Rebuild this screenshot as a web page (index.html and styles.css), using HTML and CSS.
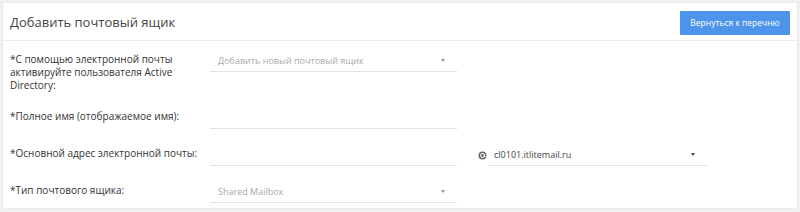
FILE: index.html
```html
<!DOCTYPE html>
<html lang="ru">
<head>
    <meta charset="UTF-8">
    <meta name="viewport" content="width=device-width, initial-scale=1.0">
    <title>Добавить почтовый ящик</title>
    <link rel="stylesheet" href="styles.css">
</head>
<body>

    <div class="card">
        <div class="card-header">
            <h1 class="title">Добавить почтовый ящик</h1>
            <button class="btn-back">Вернуться к перечню</button>
        </div>

        <form class="form">
            <div class="row">
                <label class="label label-wrap">*С помощью электронной почты активируйте пользователя Active Directory:</label>
                <div class="field select placeholder">Добавить новый почтовый ящик<span class="caret"></span></div>
            </div>

            <div class="row">
                <label class="label">*Полное имя (отображаемое имя):</label>
                <div class="field"></div>
            </div>

            <div class="row">
                <label class="label">*Основной адрес электронной почты:</label>
                <div class="field"></div>
                <div class="domain">
                    <svg class="at-icon" width="9" height="9" viewBox="0 0 16 16">
                        <circle cx="8" cy="8" r="7" fill="#666"/>
                        <circle cx="8" cy="8" r="3.4" fill="none" stroke="#fff" stroke-width="1.8"/>
                        <path d="M11.4 6v3.2c0 1.4 2.2 1.4 2.2 0" fill="none" stroke="#fff" stroke-width="1.6"/>
                    </svg>
                    <div class="field select domain-field">cl0101.itlitemail.ru<span class="caret dark"></span></div>
                </div>
            </div>

            <div class="row">
                <label class="label">*Тип почтового ящика:</label>
                <div class="field select placeholder">Shared Mailbox<span class="caret"></span></div>
            </div>
        </form>
    </div>

</body>
</html>
```

FILE: styles.css
```css
body {
    margin: 0;
    padding: 3px 3px 5px 3px;
    background: #f1f1f1;
    font-family: "Open Sans", Arial, sans-serif;
    color: #333;
}
.card {
    background: #fff;
    box-shadow: 0 0 2px rgba(0, 0, 0, 0.08);
}
.card-header {
    display: flex;
    justify-content: space-between;
    align-items: center;
    height: 37px;
    padding: 0 7px;
    border-bottom: 1px solid #ececec;
}
.title {
    margin: 0;
    font-size: 13px;
    font-weight: normal;
    color: #444;
}
.btn-back {
    width: 110px;
    height: 24px;
    margin-top: 2px;
    background: #4d94ea;
    color: #fff;
    border: none;
    border-radius: 1px;
    font-family: inherit;
    font-size: 8.5px;
    padding: 0;
}
.form {
    display: flex;
    flex-direction: column;
    gap: 15px;
    padding: 9px 7px 5px 7px;
}
.row {
    display: flex;
    align-items: flex-start;
}
.label {
    width: 200px;
    font-size: 10px;
    line-height: 13px;
    padding-top: 3px;
    padding-right: 6px;
    box-sizing: border-box;
    white-space: nowrap;
    color: #333;
}
.label-wrap {
    white-space: normal;
    padding-right: 30px;
}
.field {
    position: relative;
    width: 247px;
    height: 22px;
    line-height: 21px;
    box-sizing: border-box;
    border-bottom: 1px solid #e3e3e3;
    padding-left: 8px;
    font-size: 9px;
}
.placeholder {
    color: #aaa;
}
.caret {
    position: absolute;
    right: 12px;
    top: 9px;
    border-left: 2.5px solid transparent;
    border-right: 2.5px solid transparent;
    border-top: 3px solid #999;
}
.caret.dark {
    border-top-color: #444;
}
.domain {
    display: flex;
    align-items: center;
    margin-left: 21px;
    height: 22px;
}
.at-icon {
    margin-right: 1px;
}
.domain-field {
    width: 219px;
    padding-left: 6px;
    color: #444;
}
```
